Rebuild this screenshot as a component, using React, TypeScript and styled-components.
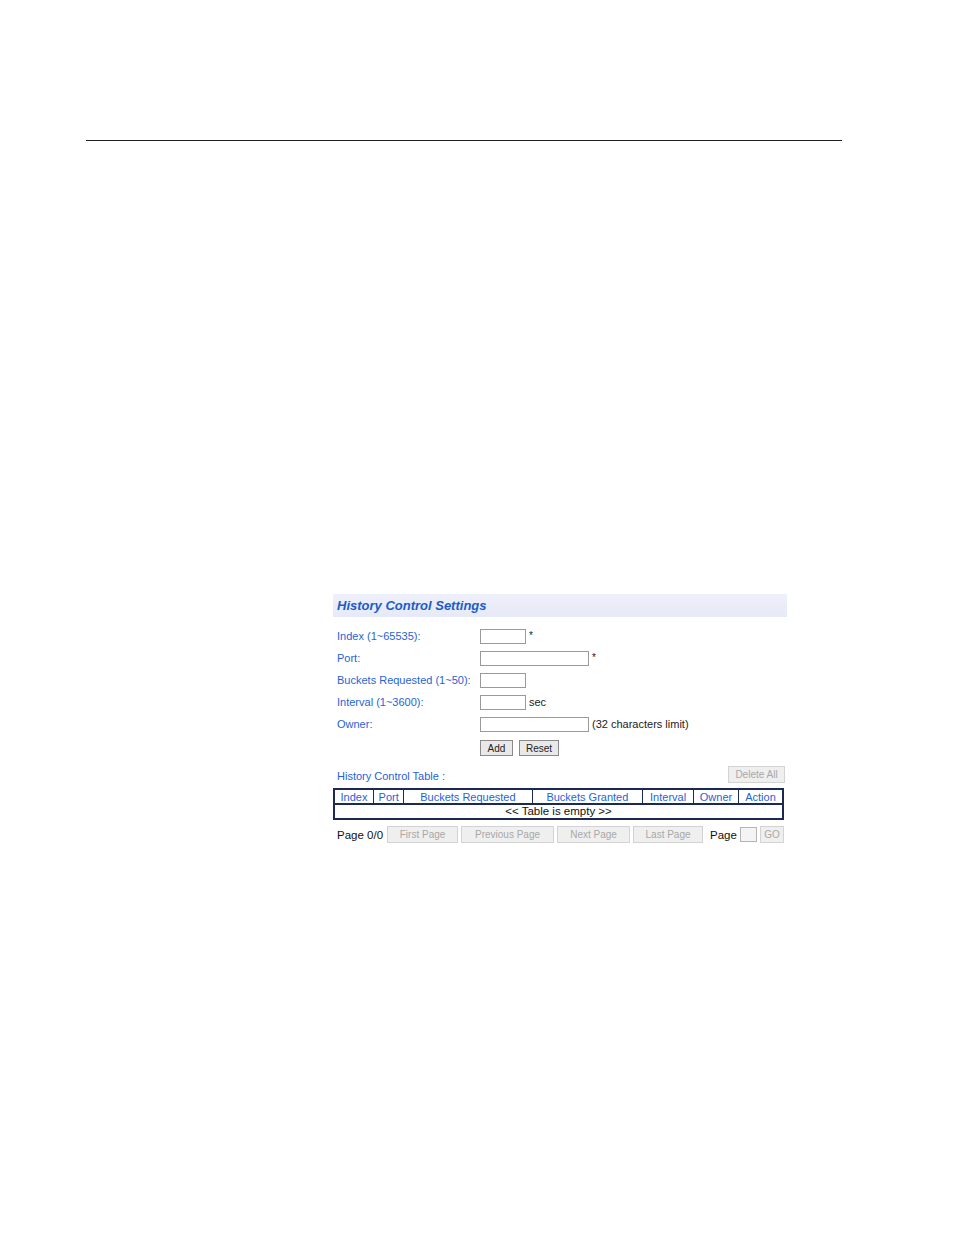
import styled, { createGlobalStyle } from "styled-components";

const GlobalStyle = createGlobalStyle`
  html, body {
    margin: 0;
    padding: 0;
    background: #ffffff;
  }
  body {
    font-family: "Liberation Sans", Arial, sans-serif;
  }
`;

const Page = styled.div`
  width: 954px;
  min-height: 1235px;
  padding: 140px 0 0 86px;
  box-sizing: border-box;
`;

const Rule = styled.div`
  width: 756px;
  height: 1px;
  background: #231f20;
`;

const Panel = styled.div`
  margin: 453px 0 0 247px;
  width: 454px;
`;

const TitleBar = styled.div`
  height: 23px;
  display: flex;
  align-items: center;
  padding-left: 4px;
  background: linear-gradient(#eef0fa, #e6e9f7);
  color: #1a5cc8;
  font-size: 13px;
  font-weight: bold;
  font-style: italic;
`;

const Form = styled.div`
  display: grid;
  grid-template-columns: 143px auto;
  grid-auto-rows: 22px;
  margin-top: 8px;
  padding-left: 4px;
  font-size: 11px;
`;

const Label = styled.div`
  display: flex;
  align-items: center;
  color: #1f63d6;
  white-space: nowrap;
`;

const Field = styled.div`
  display: flex;
  align-items: center;
  gap: 3px;
  color: #222;
`;

const Input = styled.div<{ $w: number }>`
  box-sizing: border-box;
  width: ${(p) => p.$w}px;
  height: 15px;
  border: 1px solid #9a9a9a;
  background: #fff;
`;

const Note = styled.span`
  font-size: 11px;
  color: #222;
  white-space: nowrap;
`;

const Star = styled.span`
  font-size: 10px;
  align-self: flex-start;
  margin-top: 5px;
`;

const Actions = styled.div`
  display: flex;
  gap: 6px;
  margin: 5px 0 0 147px;
`;

const Button = styled.button<{ $w?: number; $disabled?: boolean }>`
  box-sizing: border-box;
  width: ${(p) => (p.$w ? `${p.$w}px` : "auto")};
  height: 16px;
  padding: 0;
  flex-shrink: 0;
  white-space: nowrap;
  font-family: "Liberation Sans", Arial, sans-serif;
  font-size: 10px;
  border: 1px solid ${(p) => (p.$disabled ? "#d3d3d3" : "#8a8a8a")};
  background: ${(p) => (p.$disabled ? "#efefef" : "#e9e9e9")};
  color: ${(p) => (p.$disabled ? "#a8a8a8" : "#222")};
  border-radius: 0;
`;

const TableHead = styled.div`
  display: flex;
  justify-content: space-between;
  align-items: flex-end;
  margin-top: 10px;
  padding-left: 4px;
`;

const TableCaption = styled.span`
  font-size: 11px;
  color: #1f63d6;
  margin-bottom: 1px;
`;

const DeleteButton = styled(Button)`
  height: 17px;
  margin-right: 2px;
`;

const Table = styled.table`
  margin-top: 5px;
  width: 451px;
  border-collapse: collapse;
  border: 2px solid #1c2a52;
  font-size: 11px;
`;

const Th = styled.th<{ $w: number }>`
  width: ${(p) => p.$w}px;
  height: 13px;
  padding: 0;
  font-weight: normal;
  color: #1f63d6;
  border: 1px solid #1c2a52;
  border-bottom: 2px solid #1c2a52;
  line-height: 12px;
  white-space: nowrap;
`;

const Td = styled.td`
  height: 13px;
  padding: 0;
  text-align: center;
  color: #111;
  font-size: 11.5px;
  line-height: 13px;
`;

const Pager = styled.div`
  display: flex;
  align-items: center;
  gap: 3px;
  margin-top: 6px;
  padding-left: 4px;
  font-size: 11.5px;
  color: #111;
`;

const PagerText = styled.span<{ $left?: number; $right?: number }>`
  white-space: nowrap;
  flex-shrink: 0;
  margin: 0 ${(p) => p.$right ?? 0}px 0 ${(p) => p.$left ?? 0}px;
`;

const PagerButton = styled(Button)`
  height: 17px;
`;

const PageInput = styled.div`
  box-sizing: border-box;
  width: 17px;
  height: 15px;
  border: 1px solid #b5b5b5;
  background: #f4f4f4;
  flex-shrink: 0;
`;

const columns: [string, number][] = [
  ["Index", 39],
  ["Port", 30],
  ["Buckets Requested", 130],
  ["Buckets Granted", 112],
  ["Interval", 51],
  ["Owner", 45],
  ["Action", 44],
];

export default function App() {
  return (
    <>
      <GlobalStyle />
      <Page>
        <Rule />
        <Panel>
          <TitleBar>History Control Settings</TitleBar>
          <Form>
            <Label>Index (1~65535):</Label>
            <Field>
              <Input $w={46} />
              <Star>*</Star>
            </Field>
            <Label>Port:</Label>
            <Field>
              <Input $w={109} />
              <Star>*</Star>
            </Field>
            <Label>Buckets Requested (1~50):</Label>
            <Field>
              <Input $w={46} />
            </Field>
            <Label>Interval (1~3600):</Label>
            <Field>
              <Input $w={46} />
              <Note>sec</Note>
            </Field>
            <Label>Owner:</Label>
            <Field>
              <Input $w={109} />
              <Note>(32 characters limit)</Note>
            </Field>
          </Form>
          <Actions>
            <Button $w={33}>Add</Button>
            <Button $w={40}>Reset</Button>
          </Actions>
          <TableHead>
            <TableCaption>History Control Table :</TableCaption>
            <DeleteButton $w={57} $disabled>
              Delete All
            </DeleteButton>
          </TableHead>
          <Table>
            <thead>
              <tr>
                {columns.map(([name, w]) => (
                  <Th key={name} $w={w}>
                    {name}
                  </Th>
                ))}
              </tr>
            </thead>
            <tbody>
              <tr>
                <Td colSpan={7}>&lt;&lt; Table is empty &gt;&gt;</Td>
              </tr>
            </tbody>
          </Table>
          <Pager>
            <PagerText $right={1}>Page 0/0</PagerText>
            <PagerButton $w={71} $disabled>
              First Page
            </PagerButton>
            <PagerButton $w={93} $disabled>
              Previous Page
            </PagerButton>
            <PagerButton $w={73} $disabled>
              Next Page
            </PagerButton>
            <PagerButton $w={70} $disabled>
              Last Page
            </PagerButton>
            <PagerText $left={4}>Page</PagerText>
            <PageInput />
            <PagerButton $w={24} $disabled>
              GO
            </PagerButton>
          </Pager>
        </Panel>
      </Page>
    </>
  );
}
